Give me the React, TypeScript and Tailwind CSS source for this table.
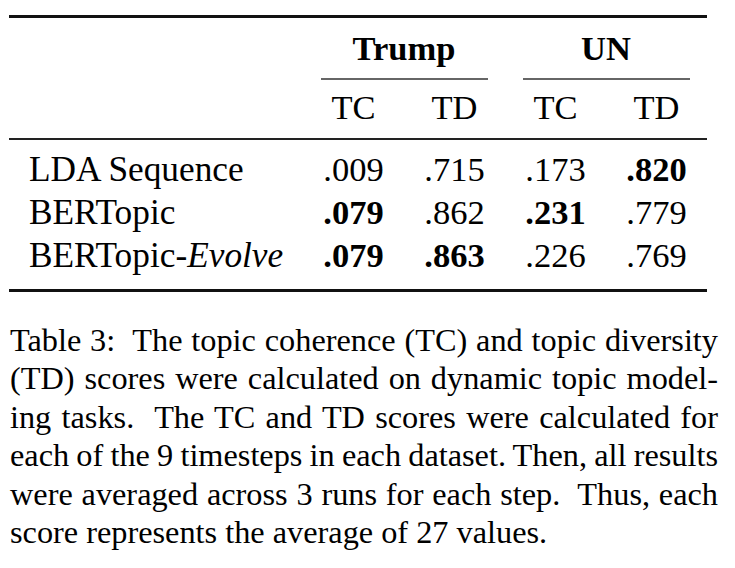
const ROWS = [
  { name: <>LDA Sequence</>, cells: [['.009', false], ['.715', false], ['.173', false], ['.820', true]] },
  { name: <>BERTopic</>, cells: [['.079', true], ['.862', false], ['.231', true], ['.779', false]] },
  {
    name: (
      <>
        BERTopic-<i>Evolve</i>
      </>
    ),
    cells: [['.079', true], ['.863', true], ['.226', false], ['.769', false]],
  },
] as const

const CAPTION = [
  'Table 3:  The topic coherence (TC) and topic diversity',
  '(TD) scores were calculated on dynamic topic model-',
  'ing tasks.  The TC and TD scores were calculated for',
  'each of the 9 timesteps in each dataset. Then, all results',
  'were averaged across 3 runs for each step.  Thus, each',
]

const grid = 'grid grid-cols-[294px_101px_101px_101px_101px]'

export default function App() {
  return (
    <div className="w-[735px] h-[568px] bg-white text-black font-['Liberation_Serif',serif] overflow-hidden">
      <div className="pt-[15px] ml-[9px] w-[698px]">
        <div className="h-[3px] bg-[#111]" />

        {/* group headers */}
        <div className={`${grid} mt-[9px] text-[34.5px] leading-[43px] font-bold`}>
          <div />
          <div className="col-span-2 text-center">Trump</div>
          <div className="col-span-2 text-center">UN</div>
        </div>
        <div className={`${grid} mt-[8px]`}>
          <div />
          <div className="col-span-2 pl-[18px] pr-[17px]">
            <div className="h-[1.5px] bg-[#666]" />
          </div>
          <div className="col-span-2 pl-[18px] pr-[17px]">
            <div className="h-[1.5px] bg-[#666]" />
          </div>
        </div>
        <div className={`${grid} mt-[6px] text-[34.5px] leading-[43px]`}>
          <div />
          <div className="text-center">TC</div>
          <div className="text-center">TD</div>
          <div className="text-center">TC</div>
          <div className="text-center">TD</div>
        </div>

        <div className="h-[2px] bg-[#222] mt-[9px]" />

        <div className="mt-[8px] text-[34.5px] leading-[43px]">
          {ROWS.map((row, i) => (
            <div key={i} className={grid}>
              <div className="pl-[20px] whitespace-nowrap text-[35.3px]">{row.name}</div>
              {row.cells.map(([v, bold], j) => (
                <div key={j} className={bold ? 'text-center font-bold' : 'text-center'}>
                  {v}
                </div>
              ))}
            </div>
          ))}
        </div>

        <div className="h-[3px] bg-[#111] mt-[12px]" />
      </div>

      <div className="ml-[10px] w-[708px] mt-[29px] text-[32.3px] leading-[38.5px]">
        {CAPTION.map((line, i) => (
          <div
            key={i}
            className={
              i === 3
                ? 'whitespace-pre text-justify [text-align-last:justify] [word-spacing:-2px]'
                : 'whitespace-pre text-justify [text-align-last:justify]'
            }
          >
            {line}
          </div>
        ))}
        <div className="whitespace-pre">score represents the average of 27 values.</div>
      </div>
    </div>
  )
}
